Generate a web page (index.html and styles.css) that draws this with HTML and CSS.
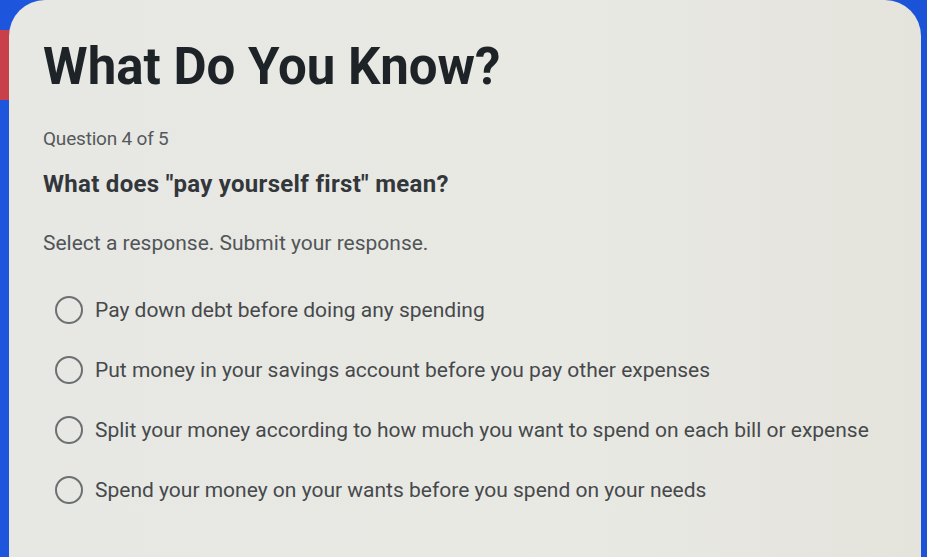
FILE: index.html
```html
<!DOCTYPE html>
<html>
<head>
    <meta charset="UTF-8" />
    <meta name="viewport" content="width=device-width, initial-scale=1.0"/>
    <title>What Do You Know?</title>
    <link rel="stylesheet" href="styles.css">
</head>
<body>
    <div class="page">
        <div class="edge-mark"></div>
        <main class="card">
            <h1 class="title">What Do You Know?</h1>
            <p class="counter">Question 4 of 5</p>
            <h2 class="question">What does "pay yourself first" mean?</h2>
            <p class="hint">Select a response. Submit your response.</p>

            <!-- answer choices -->
            <form class="choices">
                <label class="choice">
                    <input type="radio" name="answer" value="a">
                    <span>Pay down debt before doing any spending</span>
                </label>
                <label class="choice">
                    <input type="radio" name="answer" value="b">
                    <span>Put money in your savings account before you pay other expenses</span>
                </label>
                <label class="choice">
                    <input type="radio" name="answer" value="c">
                    <span>Split your money according to how much you want to spend on each bill or expense</span>
                </label>
                <label class="choice">
                    <input type="radio" name="answer" value="d">
                    <span>Spend your money on your wants before you spend on your needs</span>
                </label>
            </form>
        </main>
    </div>
</body>
</html>
```

FILE: styles.css
```css
* {
    margin: 0;
    padding: 0;
    box-sizing: border-box;
}
html, body {
    height: 100%;
    overflow: hidden;
}
body {
    font-family: Roboto, "Liberation Sans", sans-serif;
    background: linear-gradient(90deg, #1d55dc 0%, #2260e6 50%, #1a52d8 100%);
}
.page {
    position: relative;
    padding: 0 6px 0 9px;
    height: 100%;
}

/* red tab peeking out at the left edge */
.edge-mark {
    position: absolute;
    left: 0;
    top: 30px;
    width: 10px;
    height: 70px;
    background: #c7404a;
}

.card {
    position: relative;
    height: 100%;
    background: linear-gradient(90deg, #e7e8e3 0%, #e9e9e4 60%, #e4e3dc 100%);
    border-radius: 36px 36px 0 0;
    padding: 41px 30px 0 34px;
}

.title {
    font-size: 51px;
    line-height: 51px;
    font-weight: 700;
    color: #1d2327;
}
.counter {
    margin-top: 36px;
    font-size: 19px;
    line-height: 22px;
    color: #55595c;
    letter-spacing: -0.2px;
}
.question {
    margin-top: 20px;
    font-size: 24px;
    line-height: 28px;
    font-weight: 700;
    color: #33373b;
    letter-spacing: 0.3px;
}
.hint {
    margin-top: 32px;
    font-size: 21px;
    line-height: 26px;
    color: #515558;
}

/* radio list */
.choices {
    margin-top: 24px;
    display: flex;
    flex-direction: column;
}
.choice {
    display: flex;
    align-items: center;
    height: 60px;
    padding-left: 12px;
    font-size: 21px;
    color: #46494c;
}
.choice input {
    appearance: none;
    -webkit-appearance: none;
    width: 28px;
    height: 28px;
    border: 2px solid #6d7072;
    border-radius: 50%;
    background: transparent;
    margin-right: 12px;
    flex-shrink: 0;
}
```
